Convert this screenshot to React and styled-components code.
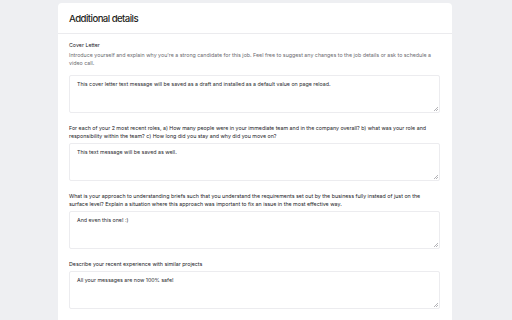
import React from "react";
import styled, { createGlobalStyle } from "styled-components";

const GlobalStyle = createGlobalStyle`
  html, body {
    margin: 0;
    padding: 0;
    background: #eeeff2;
    font-family: Inter, "Liberation Sans", sans-serif;
    overflow: hidden;
  }
`;

const Page = styled.div`
  width: 512px;
  height: 320px;
  padding: 3px 0 0 58px;
  box-sizing: border-box;
`;

const Card = styled.section`
  width: 394px;
  min-height: 330px;
  background: #ffffff;
  border-radius: 4px 4px 0 0;
`;

const CardHeader = styled.header`
  height: 30px;
  display: flex;
  align-items: center;
  padding-left: 11px;
  border-bottom: 1px solid #ebebee;
`;

const Title = styled.h2`
  margin: 0;
  font-size: 9.6px;
  font-weight: 500;
  letter-spacing: -0.55px;
  color: #1f1f22;
`;

const CardBody = styled.div`
  padding: 7px 12px 0 11px;
  display: flex;
  flex-direction: column;
  gap: 11px;
`;

const Field = styled.div`
  display: flex;
  flex-direction: column;
`;

const Label = styled.label`
  font-size: 5.3px;
  line-height: 8px;
  color: #222226;
`;

const Hint = styled.p`
  margin: 2px 0 5px;
  font-size: 5.3px;
  line-height: 8px;
  color: #6b6b70;
`;

const InputWrap = styled.div`
  position: relative;
  margin-top: 3px;
  display: flex;

  &::after {
    content: "";
    position: absolute;
    right: 2px;
    bottom: 2px;
    width: 4px;
    height: 4px;
    pointer-events: none;
    background: linear-gradient(135deg, transparent 40%, #b4b4b8 40%, #b4b4b8 52%, transparent 52%,
      transparent 70%, #b4b4b8 70%, #b4b4b8 82%, transparent 82%);
  }
`;

const Input = styled.textarea`
  flex: 1;
  height: 38px;
  box-sizing: border-box;
  border: 1px solid #ececef;
  border-radius: 2px;
  padding: 4px 7px;
  font-family: inherit;
  font-size: 5.3px;
  line-height: 8px;
  color: #2a2a2e;
  background: #fff;
  outline: none;
  resize: none;
`;

const fields = [
  {
    label: "For each of your 2 most recent roles, a) How many people were in your immediate team and in the company overall? b) what was your role and responsibility within the team? c) How long did you stay and why did you move on?",
    value: "This text message will be saved as well.",
  },
  {
    label: "What is your approach to understanding briefs such that you understand the requirements set out by the business fully instead of just on the surface level? Explain a situation where this approach was important to fix an issue in the most effective way.",
    value: "And even this one! :)",
  },
  {
    label: "Describe your recent experience with similar projects",
    value: "All your messages are now 100% safe!",
  },
];

export default function App() {
  return (
    <Page>
      <GlobalStyle />
      <Card>
        <CardHeader>
          <Title>Additional details</Title>
        </CardHeader>
        <CardBody>
          <Field>
            <Label>Cover Letter</Label>
            <Hint>
              Introduce yourself and explain why you're a strong candidate for this job. Feel free to suggest any changes to the job details or ask to schedule a video call.
            </Hint>
            <InputWrap>
              <Input defaultValue="This cover letter text message will be saved as a draft and installed as a default value on page reload." />
            </InputWrap>
          </Field>
          {fields.map((f) => (
            <Field key={f.value}>
              <Label>{f.label}</Label>
              <InputWrap>
                <Input defaultValue={f.value} />
              </InputWrap>
            </Field>
          ))}
        </CardBody>
      </Card>
    </Page>
  );
}
